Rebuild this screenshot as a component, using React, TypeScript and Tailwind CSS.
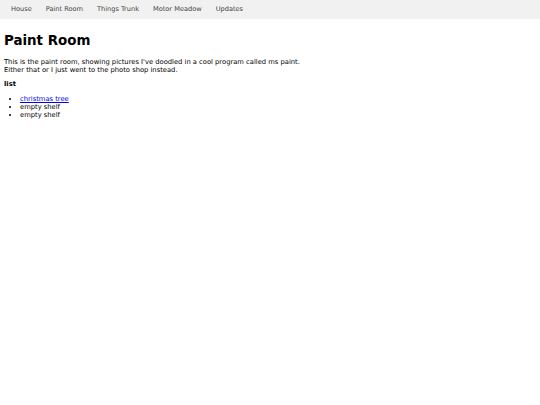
export default function App() {
  return (
    <div className="min-h-[405px] bg-white text-black" style={{ fontFamily: '"DejaVu Sans", Verdana, sans-serif' }}>
      <nav className="flex h-[19px] items-center bg-[#f1f1f1] pl-[4px] text-[6.62px] text-[#444]">
        <span className="px-[7px]">House</span>
        <span className="px-[7px]">Paint Room</span>
        <span className="px-[7px]">Things Trunk</span>
        <span className="px-[7px]">Motor Meadow</span>
        <span className="px-[7px]">Updates</span>
      </nav>
      <div className="px-[4px]">
        <h1 className="mt-[14.4px] text-[13.4px] font-bold leading-[16px]">Paint Room</h1>
        <p className="mt-[8.5px] text-[6.75px] leading-[8px]">
          This is the paint room, showing pictures I've doodled in a cool program called ms paint.
          <br />
          Either that or I just went to the photo shop instead.
        </p>
        <p className="mt-[6px] text-[6.75px] font-bold leading-[8px]">list</p>
        <ul className="mt-[7px] list-disc pl-[16px] text-[6.75px] leading-[8px]">
          <li><a href="#" className="text-[#0000ee] underline">christmas tree</a></li>
          <li>empty shelf</li>
          <li>empty shelf</li>
        </ul>
      </div>
    </div>
  );
}
